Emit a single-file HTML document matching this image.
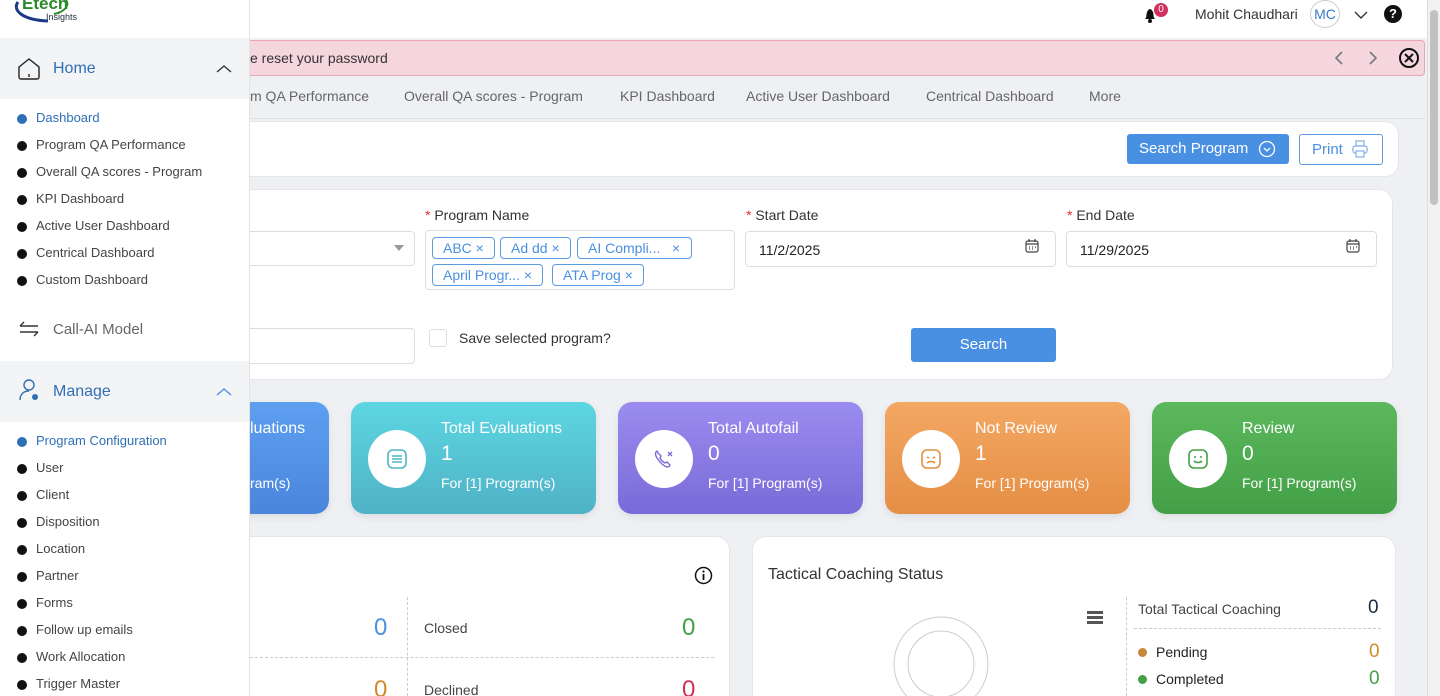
<!DOCTYPE html>
<html style="width:1440px;height:696px;overflow:hidden"><head><meta charset="utf-8"><style>
*{box-sizing:border-box;margin:0;padding:0}
body{width:1440px;height:696px;overflow:hidden;background:#eef0f4;font-family:"Liberation Sans",sans-serif;position:relative;color:#333}
.abs{position:absolute}
.side{left:0;top:0;width:250px;height:696px;background:#fff;border-right:1px solid #e2e2e2;z-index:5}
.sub{position:absolute;left:17px;font-size:13px;color:#444}
.sub:before{content:"";position:absolute;left:0;top:4px;width:10px;height:10px;border-radius:50%;background:#111}
.sub.b:before{background:#2f6fb5}
.sub span{margin-left:19px}
.tab{position:absolute;top:88px;font-size:14px;color:#666}
.card{position:absolute;background:#fff;border-radius:14px}
.lbl{position:absolute;font-size:14px;color:#333}
.lbl b{color:#d33;font-weight:normal}
.inp{position:absolute;border:1px solid #ddd;border-radius:4px;background:#fff;font-size:14px;color:#222}
.tag{position:absolute;height:22px;border:1px solid #5b9be0;border-radius:4px;color:#4a90e2;font-size:14px;line-height:20px;padding:0 10px}
.stat{position:absolute;top:402px;height:112px;border-radius:14px;color:#fff;box-shadow:0 3px 8px rgba(0,0,0,.08)}
.stat .c{position:absolute;left:17px;top:28px;width:58px;height:58px;border-radius:50%;background:#fff}
.stat .t{position:absolute;left:90px;top:18px;font-size:16px}
.stat .n{position:absolute;left:90px;top:40px;font-size:21px}
.stat .f{position:absolute;left:90px;top:73px;font-size:14px}
</style></head><body>
<div class="abs" style="left:250px;top:0;width:1178px;height:38px;background:#fff"></div>
<svg class="abs" style="left:1143px;top:7px" width="14" height="16"><path d="M2 12c2-2 1-4 2-7 1-2 2-3 3-3s2 1 3 3c1 3 0 5 2 7z" fill="#111"/><circle cx="7" cy="14" r="2" fill="#111"/></svg>
<div class="abs" style="left:1154px;top:3px;width:14px;height:14px;border-radius:50%;background:#d0305a;color:#fff;font-size:10px;text-align:center;line-height:14px">0</div>
<div class="abs" style="left:1195px;top:6px;font-size:14px;color:#333">Mohit Chaudhari</div>
<div class="abs" style="left:1310px;top:0;width:30px;height:28px;border:1px solid #ccc;border-radius:50%;color:#3a7cc6;font-size:14px;text-align:center;line-height:26px">MC</div>
<svg class="abs" style="left:1354px;top:10px" width="14" height="10"><path d="M1 2l6 6 6-6" stroke="#333" fill="none" stroke-width="1.4"/></svg>
<div class="abs" style="left:1384px;top:5px;width:18px;height:18px;border-radius:50%;background:#111;color:#fff;font-size:13px;font-weight:bold;text-align:center;line-height:18px">?</div>
<div class="abs" style="left:250px;top:40px;width:1175px;height:36px;background:#f6d6de;border:1px solid #e9a5b3;border-left:none;border-radius:0 4px 4px 0"></div>
<div class="abs" style="left:250px;top:50px;font-size:14px;color:#333">e reset your password</div>
<svg class="abs" style="left:1334px;top:51px" width="50" height="14"><path d="M8 1L2 7l6 6M36 1l6 6-6 6" stroke="#777" fill="none" stroke-width="1.6"/></svg>
<svg class="abs" style="left:1398px;top:47px" width="22" height="22"><circle cx="11" cy="11" r="9" stroke="#111" stroke-width="2" fill="none"/><path d="M7 7l8 8M15 7l-8 8" stroke="#111" stroke-width="2"/></svg>
<div class="tab" style="left:250px">m QA Performance</div>
<div class="tab" style="left:404px">Overall QA scores - Program</div>
<div class="tab" style="left:620px">KPI Dashboard</div>
<div class="tab" style="left:746px">Active User Dashboard</div>
<div class="tab" style="left:926px">Centrical Dashboard</div>
<div class="tab" style="left:1089px">More</div>
<div class="abs" style="left:250px;top:118px;width:1175px;height:1px;background:#e0e0e0"></div>
<div class="card" style="left:236px;top:121px;width:1163px;height:56px;border:1px solid #e6e6e6"></div>
<div class="abs" style="left:1127px;top:134px;width:162px;height:30px;background:#4a90e2;border-radius:3px;color:#fff;font-size:15px;line-height:30px;padding-left:12px">Search Program</div>
<svg class="abs" style="left:1258px;top:140px" width="18" height="18"><circle cx="9" cy="9" r="7.5" fill="none" stroke="#fff" stroke-width="1.3"/><path d="M6 8l3 3 3-3" fill="none" stroke="#fff" stroke-width="1.3"/></svg>
<div class="abs" style="left:1299px;top:134px;width:84px;height:31px;border:1px solid #5b9be0;border-radius:3px;color:#4a90e2;font-size:15px;line-height:29px;padding-left:12px;background:#fff">Print</div>
<svg class="abs" style="left:1352px;top:140px" width="16" height="18"><rect x="4" y="1" width="8" height="5" fill="none" stroke="#8ab4e8" stroke-width="1.3"/><rect x="1" y="6" width="14" height="7" rx="2" fill="none" stroke="#8ab4e8" stroke-width="1.3"/><rect x="4" y="11" width="8" height="6" fill="#fff" stroke="#8ab4e8" stroke-width="1.3"/></svg>
<div class="card" style="left:236px;top:189px;width:1157px;height:191px;border:1px solid #e6e6e6"></div>
<div class="inp" style="left:236px;top:231px;width:179px;height:35px"></div>
<svg class="abs" style="left:394px;top:245px" width="10" height="6"><path d="M0 0h10L5 6z" fill="#999"/></svg>
<div class="lbl" style="left:425px;top:207px"><b>*</b> Program Name</div>
<div class="inp" style="left:425px;top:230px;width:310px;height:60px"></div>
<div class="tag" style="left:432px;top:237px">ABC ×</div>
<div class="tag" style="left:500px;top:237px">Ad dd ×</div>
<div class="tag" style="left:577px;top:237px;width:115px">AI Compli... &nbsp;&nbsp;×</div>
<div class="tag" style="left:432px;top:264px">April Progr... ×</div>
<div class="tag" style="left:552px;top:264px">ATA Prog ×</div>
<div class="lbl" style="left:746px;top:207px"><b>*</b> Start Date</div>
<div class="inp" style="left:745px;top:231px;width:311px;height:36px;padding:10px 13px">11/2/2025</div>
<svg class="abs" style="left:1025px;top:239px" width="14" height="14"><rect x="1" y="2" width="12" height="11" rx="2" fill="none" stroke="#444" stroke-width="1.2"/><path d="M1 5h12M4 0v3M10 0v3M4 8h1M7 8h1M10 8h1M4 10h1M7 10h1" stroke="#444" stroke-width="1.2"/></svg>
<div class="lbl" style="left:1067px;top:207px"><b>*</b> End Date</div>
<div class="inp" style="left:1066px;top:231px;width:311px;height:36px;padding:10px 13px">11/29/2025</div>
<svg class="abs" style="left:1346px;top:239px" width="14" height="14"><rect x="1" y="2" width="12" height="11" rx="2" fill="none" stroke="#444" stroke-width="1.2"/><path d="M1 5h12M4 0v3M10 0v3M4 8h1M7 8h1M10 8h1M4 10h1M7 10h1" stroke="#444" stroke-width="1.2"/></svg>
<div class="inp" style="left:236px;top:328px;width:179px;height:36px"></div>
<div class="abs" style="left:429px;top:329px;width:18px;height:18px;border:1px solid #ddd;border-radius:3px"></div>
<div class="lbl" style="left:459px;top:330px">Save selected program?</div>
<div class="abs" style="left:911px;top:328px;width:145px;height:34px;background:#4a90e2;border-radius:3px;color:#fff;font-size:15px;text-align:center;line-height:34px">Search</div>
<div class="stat" style="left:200px;width:129px;background:linear-gradient(#5e9ff0,#4a86dc)"><div class="t" style="left:50px">luations</div><div class="f" style="left:50px">ram(s)</div></div>
<div class="stat" style="left:351px;width:245px;background:linear-gradient(#5dd6e2,#4fb2c6)"><div class="c"><svg style="margin:18px" width="22" height="22"><rect x="2" y="2" width="18" height="18" rx="5" fill="none" stroke="#4fb5c6" stroke-width="1.6"/><path d="M6 8h10M6 11h10M6 14h10" stroke="#4fb5c6" stroke-width="1.6"/></svg></div><div class="t">Total Evaluations</div><div class="n">1</div><div class="f">For [1] Program(s)</div></div>
<div class="stat" style="left:618px;width:245px;background:linear-gradient(#9b8cf0,#7a6ad8)"><div class="c"><svg style="margin:18px" width="22" height="22"><path d="M4 3c-2 1-2 4 0 7s6 8 10 9c2 0 3-1 3-2l-3-3-2 1c-2-1-4-3-5-5l1-2-3-3z" fill="none" stroke="#7a6ad8" stroke-width="1.4"/><path d="M15 4l4 4M19 4l-4 4" stroke="#7a6ad8" stroke-width="1.3"/></svg></div><div class="t">Total Autofail</div><div class="n">0</div><div class="f">For [1] Program(s)</div></div>
<div class="stat" style="left:885px;width:245px;background:linear-gradient(#f3a863,#e58e45)"><div class="c"><svg style="margin:18px" width="22" height="22"><rect x="2" y="2" width="18" height="18" rx="5" fill="none" stroke="#e58e45" stroke-width="1.6"/><path d="M7 15c2-2 6-2 8 0M7 9l2 1M15 9l-2 1" stroke="#e58e45" stroke-width="1.6" fill="none"/></svg></div><div class="t">Not Review</div><div class="n">1</div><div class="f">For [1] Program(s)</div></div>
<div class="stat" style="left:1152px;width:245px;background:linear-gradient(#5cb85c,#43a047)"><div class="c"><svg style="margin:18px" width="22" height="22"><rect x="2" y="2" width="18" height="18" rx="5" fill="none" stroke="#43a047" stroke-width="1.6"/><path d="M7 13c2 2 6 2 8 0M7 9h2M13 9h2" stroke="#43a047" stroke-width="1.6" fill="none"/></svg></div><div class="t">Review</div><div class="n">0</div><div class="f">For [1] Program(s)</div></div>
<div class="card" style="left:236px;top:536px;width:494px;height:180px;border:1px solid #e6e6e6"></div>
<svg class="abs" style="left:694px;top:566px" width="19" height="19"><circle cx="9.5" cy="9.5" r="8" fill="none" stroke="#111" stroke-width="1.5"/><path d="M9.5 8v6" stroke="#111" stroke-width="1.8"/><circle cx="9.5" cy="5.5" r="1.1" fill="#111"/></svg>
<div class="abs" style="left:407px;top:597px;height:99px;border-left:1.5px dashed #ccc"></div>
<div class="abs" style="left:250px;top:657px;width:464px;border-top:1.5px dashed #ccc"></div>
<div class="abs" style="left:374px;top:614px;font-size:24px;color:#4a90e2">0</div>
<div class="abs" style="left:424px;top:620px;font-size:14px;color:#444">Closed</div>
<div class="abs" style="left:682px;top:614px;font-size:24px;color:#43a047">0</div>
<div class="abs" style="left:374px;top:676px;font-size:24px;color:#d18a2a">0</div>
<div class="abs" style="left:424px;top:682px;font-size:14px;color:#444">Declined</div>
<div class="abs" style="left:682px;top:676px;font-size:24px;color:#d0305a">0</div>
<div class="card" style="left:752px;top:536px;width:644px;height:180px;border:1px solid #e6e6e6"></div>
<div class="abs" style="left:768px;top:566px;font-size:16px;color:#333">Tactical Coaching Status</div>
<svg class="abs" style="left:890px;top:614px" width="102" height="90"><circle cx="51" cy="50" r="47" fill="none" stroke="#ccc"/><circle cx="51" cy="50" r="33" fill="none" stroke="#ccc"/></svg>
<div class="abs" style="left:1087px;top:611px;width:16px;height:3px;background:#555;box-shadow:0 5px #555,0 10px #555"></div>
<div class="abs" style="left:1126px;top:597px;height:99px;border-left:1.5px dashed #ccc"></div>
<div class="abs" style="left:1134px;top:628px;width:247px;border-top:1.5px dashed #ccc"></div>
<div class="abs" style="left:1138px;top:601px;font-size:14px;color:#444">Total Tactical Coaching</div>
<div class="abs" style="left:1368px;top:597px;font-size:19px;color:#1a2a40">0</div>
<div class="abs" style="left:1138px;top:648px;width:9px;height:9px;border-radius:50%;background:#c9853a"></div>
<div class="abs" style="left:1156px;top:644px;font-size:14px;color:#222">Pending</div>
<div class="abs" style="left:1369px;top:641px;font-size:19px;color:#d18a2a">0</div>
<div class="abs" style="left:1138px;top:675px;width:9px;height:9px;border-radius:50%;background:#43a047"></div>
<div class="abs" style="left:1156px;top:671px;font-size:14px;color:#222">Completed</div>
<div class="abs" style="left:1369px;top:668px;font-size:19px;color:#43a047">0</div>
<div class="abs" style="left:1427px;top:0;width:13px;height:696px;background:#f1f1f1;border-left:1px solid #ddd"></div>
<div class="abs" style="left:1430px;top:10px;width:8px;height:195px;background:#c1c1c1;border-radius:4px"></div>
<div class="abs side">
<svg class="abs" style="left:12px;top:0" width="60" height="26"><path d="M6 2c-6 8 4 18 30 19" stroke="#1d3a8a" stroke-width="3" fill="none"/><path d="M54 0c4 6-2 12-12 14" stroke="#2a8a2a" stroke-width="2" fill="none"/></svg>
<div class="abs" style="left:22px;top:-6px;font-size:17px;font-weight:bold;color:#2a8a2a">Etech</div>
<div class="abs" style="left:46px;top:12px;font-size:9px;color:#234">Insights</div>
<div class="abs" style="left:0;top:38px;width:249px;height:61px;background:#f3f4f6"></div>
<svg class="abs" style="left:17px;top:57px" width="24" height="24"><path d="M2 10L12 2l10 8v10a2 2 0 0 1-2 2H4a2 2 0 0 1-2-2z" fill="none" stroke="#222" stroke-width="1.4"/><path d="M12 17v3" stroke="#222" stroke-width="1.4"/></svg>
<div class="abs" style="left:53px;top:60px;font-size:16px;color:#2f6fb5">Home</div>
<svg class="abs" style="left:216px;top:64px" width="16" height="10"><path d="M1 8l7-6 7 6" stroke="#333" fill="none" stroke-width="1.4"/></svg>
<div class="sub b" style="top:110px;color:#2f6fb5"><span>Dashboard</span></div>
<div class="sub" style="top:137px"><span>Program QA Performance</span></div>
<div class="sub" style="top:164px"><span>Overall QA scores - Program</span></div>
<div class="sub" style="top:191px"><span>KPI Dashboard</span></div>
<div class="sub" style="top:218px"><span>Active User Dashboard</span></div>
<div class="sub" style="top:245px"><span>Centrical Dashboard</span></div>
<div class="sub" style="top:272px"><span>Custom Dashboard</span></div>
<svg class="abs" style="left:18px;top:320px" width="22" height="18"><path d="M2 6h18M2 6l4-4M20 12H2M20 12l-4 4" stroke="#333" fill="none" stroke-width="1.4"/></svg>
<div class="abs" style="left:53px;top:321px;font-size:15px;color:#666">Call-AI Model</div>
<div class="abs" style="left:0;top:361px;width:249px;height:61px;background:#f3f4f6"></div>
<svg class="abs" style="left:18px;top:378px" width="24" height="26"><circle cx="11" cy="7" r="5" fill="none" stroke="#2f6fb5" stroke-width="1.4"/><path d="M2 22c0-6 4-9 9-9" fill="none" stroke="#2f6fb5" stroke-width="1.4"/><circle cx="17" cy="19" r="3" fill="#2f6fb5"/></svg>
<div class="abs" style="left:53px;top:383px;font-size:16px;color:#2f6fb5">Manage</div>
<svg class="abs" style="left:216px;top:387px" width="16" height="10"><path d="M1 8l7-6 7 6" stroke="#4a90e2" fill="none" stroke-width="1.4"/></svg>
<div class="sub b" style="top:433px;color:#2f6fb5"><span>Program Configuration</span></div>
<div class="sub" style="top:460px"><span>User</span></div>
<div class="sub" style="top:487px"><span>Client</span></div>
<div class="sub" style="top:514px"><span>Disposition</span></div>
<div class="sub" style="top:541px"><span>Location</span></div>
<div class="sub" style="top:568px"><span>Partner</span></div>
<div class="sub" style="top:595px"><span>Forms</span></div>
<div class="sub" style="top:622px"><span>Follow up emails</span></div>
<div class="sub" style="top:649px"><span>Work Allocation</span></div>
<div class="sub" style="top:676px"><span>Trigger Master</span></div>
</div>
</body></html>
